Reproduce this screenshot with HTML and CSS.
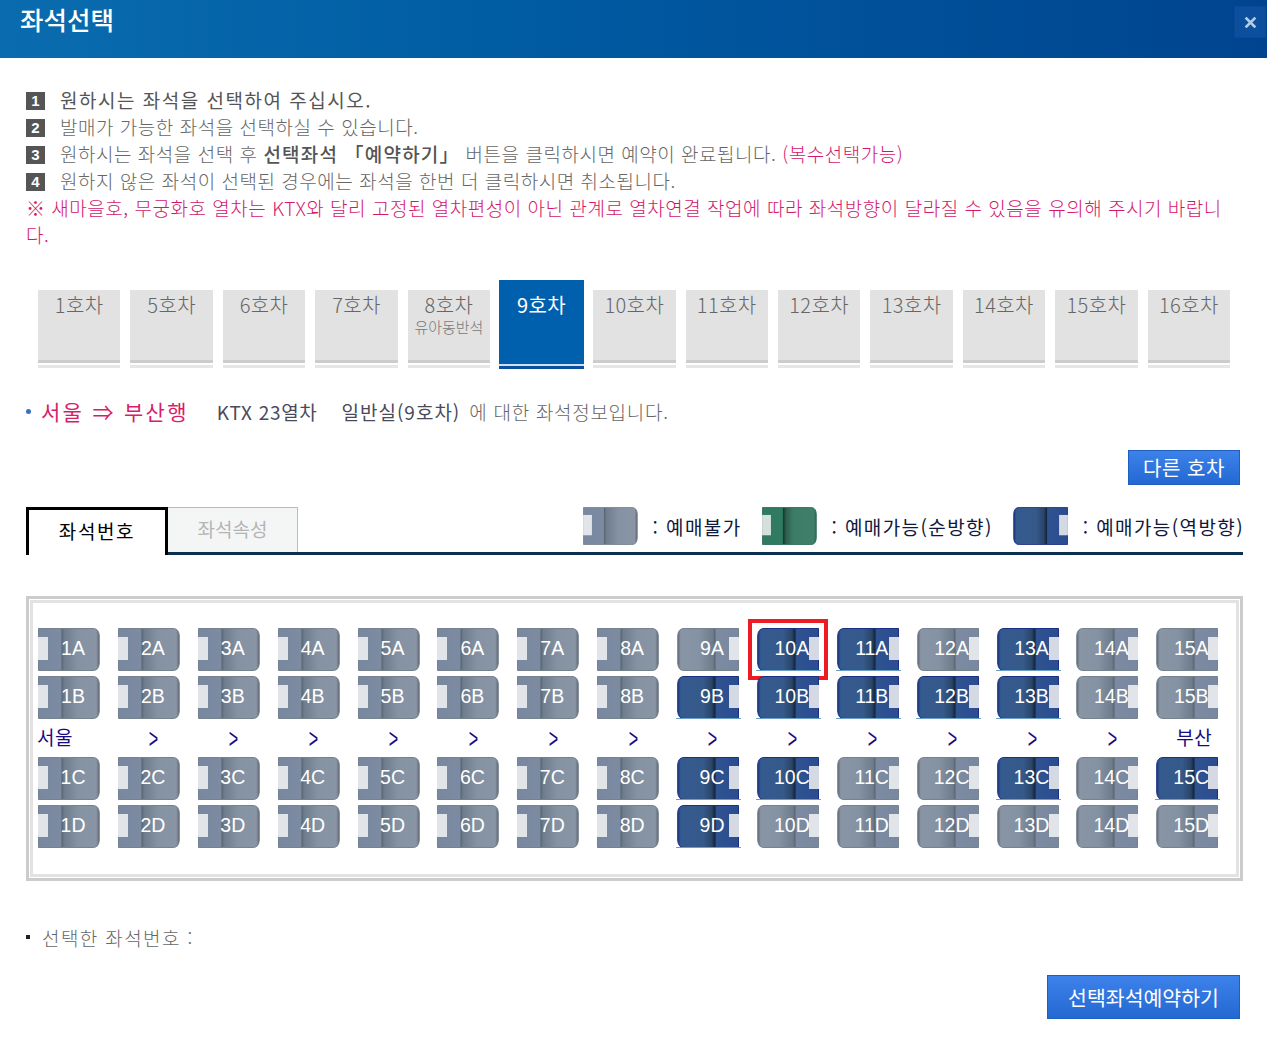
FILE: index.html
```html
<!DOCTYPE html>
<html lang="ko">
<head>
<meta charset="utf-8">
<title>좌석선택</title>
<link rel="stylesheet" href="styles.css">
</head>
<body>
<svg class="defs" width="0" height="0" aria-hidden="true">
  <defs>
    <linearGradient id="g-gray" x1="0" x2="1" y1="0" y2="0">
      <stop offset="0" stop-color="#5c6670"/><stop offset=".05" stop-color="#8995a5"/><stop offset=".35" stop-color="#8492a3"/><stop offset=".58" stop-color="#6f7c8c"/><stop offset=".615" stop-color="#5a6574"/><stop offset=".63" stop-color="#7c8ba0"/><stop offset="1" stop-color="#7888a0"/>
    </linearGradient>
    <linearGradient id="g-blue" x1="0" x2="1" y1="0" y2="0">
      <stop offset="0" stop-color="#1b3680"/><stop offset=".05" stop-color="#345a8e"/><stop offset=".42" stop-color="#36598a"/><stop offset=".56" stop-color="#2a4568"/><stop offset=".615" stop-color="#14233c"/><stop offset=".63" stop-color="#2f5290"/><stop offset="1" stop-color="#2b4d90"/>
    </linearGradient>
    <linearGradient id="g-green" x1="0" x2="1" y1="0" y2="0">
      <stop offset="0" stop-color="#2a6b55"/><stop offset=".05" stop-color="#40806a"/><stop offset=".42" stop-color="#3d7d68"/><stop offset=".56" stop-color="#2d5f4f"/><stop offset=".615" stop-color="#16382d"/><stop offset=".63" stop-color="#2f7a60"/><stop offset="1" stop-color="#2f7a60"/>
    </linearGradient>
    <symbol id="seat-gray" viewBox="0 0 62 43">
      <path d="M7 .5H61.5V42.5H7Q1 42.5 .7 35V8Q1 .5 7 .5Z" fill="url(#g-gray)" stroke="#77828f"/><rect x="52" y="9" width="10" height="23" fill="#e1e4e8"/>
    </symbol>
    <symbol id="seat-blue" viewBox="0 0 62 43">
      <path d="M7 .5H61.5V42.5H7Q1 42.5 .7 35V8Q1 .5 7 .5Z" fill="url(#g-blue)" stroke="#1c2f86"/><rect x="52" y="9" width="10" height="23" fill="#d4d9e3"/>
    </symbol>
    <symbol id="seat-green" viewBox="0 0 62 43">
      <path d="M7 .5H61.5V42.5H7Q1 42.5 .7 35V8Q1 .5 7 .5Z" fill="url(#g-green)" stroke="#2b6a55"/><rect x="52" y="9" width="10" height="23" fill="#d6e0db"/>
    </symbol>
  </defs>
</svg>

<header class="top">
  <h1 class="title">좌석선택</h1>
  <button class="close" type="button">
    <svg viewBox="0 0 12 12" width="13" height="13"><path d="M1.5 1.5L10.5 10.5M10.5 1.5L1.5 10.5" stroke="#b9cbe0" stroke-width="2.6" fill="none"/></svg>
  </button>
</header>

<main class="content">
  <ol class="notes">
    <li class="note strong"><span class="num">1</span>원하시는 좌석을 선택하여 주십시오.</li>
    <li class="note"><span class="num">2</span>발매가 가능한 좌석을 선택하실 수 있습니다.</li>
    <li class="note"><span class="num">3</span>원하시는 좌석을 선택 후 <b class="em">선택좌석 「예약하기」</b> 버튼을 클릭하시면 예약이 완료됩니다. <span class="pink">(복수선택가능)</span></li>
    <li class="note"><span class="num">4</span>원하지 않은 좌석이 선택된 경우에는 좌석을 한번 더 클릭하시면 취소됩니다.</li>
    <li class="note pink">※ 새마을호, 무궁화호 열차는 KTX와 달리 고정된 열차편성이 아닌 관계로 열차연결 작업에 따라 좌석방향이 달라질 수 있음을 유의해 주시기 바랍니<br>다.</li>
  </ol>

  <nav class="cars">
    <a class="car">1호차</a>
    <a class="car">5호차</a>
    <a class="car">6호차</a>
    <a class="car">7호차</a>
    <a class="car">8호차<small class="sub">유아동반석</small></a>
    <a class="car active">9호차</a>
    <a class="car">10호차</a>
    <a class="car">11호차</a>
    <a class="car">12호차</a>
    <a class="car">13호차</a>
    <a class="car">14호차</a>
    <a class="car">15호차</a>
    <a class="car">16호차</a>
  </nav>

  <p class="route"><i class="dot"></i><span class="route-name">서울 ⇒ 부산행</span><span class="train">KTX 23열차</span><span class="train">일반실(9호차)</span><span class="desc">에 대한 좌석정보입니다.</span></p>

  <div class="other-row"><button class="btn other" type="button">다른 호차</button></div>

  <div class="tabbar">
    <div class="tab on">좌석번호</div>
    <div class="tab off">좌석속성</div>
    <div class="legend">
      <svg class="lg-seat flip"><use href="#seat-gray"/></svg><span class="lg-text">: 예매불가</span>
      <svg class="lg-seat flip"><use href="#seat-green"/></svg><span class="lg-text">: 예매가능(순방향)</span>
      <svg class="lg-seat"><use href="#seat-blue"/></svg><span class="lg-text">: 예매가능(역방향)</span>
    </div>
  </div>

  <section class="map">
    <div class="map-inner">
      <div class="grid">
        <div class="seat"><svg class="flip"><use href="#seat-gray"/></svg><b>1A</b></div>
        <div class="seat"><svg class="flip"><use href="#seat-gray"/></svg><b>2A</b></div>
        <div class="seat"><svg class="flip"><use href="#seat-gray"/></svg><b>3A</b></div>
        <div class="seat"><svg class="flip"><use href="#seat-gray"/></svg><b>4A</b></div>
        <div class="seat"><svg class="flip"><use href="#seat-gray"/></svg><b>5A</b></div>
        <div class="seat"><svg class="flip"><use href="#seat-gray"/></svg><b>6A</b></div>
        <div class="seat"><svg class="flip"><use href="#seat-gray"/></svg><b>7A</b></div>
        <div class="seat"><svg class="flip"><use href="#seat-gray"/></svg><b>8A</b></div>
        <div class="seat"><svg><use href="#seat-gray"/></svg><b>9A</b></div>
        <div class="seat avail picked"><svg><use href="#seat-blue"/></svg><b>10A</b></div>
        <div class="seat avail"><svg><use href="#seat-blue"/></svg><b>11A</b></div>
        <div class="seat"><svg><use href="#seat-gray"/></svg><b>12A</b></div>
        <div class="seat avail"><svg><use href="#seat-blue"/></svg><b>13A</b></div>
        <div class="seat"><svg><use href="#seat-gray"/></svg><b>14A</b></div>
        <div class="seat"><svg><use href="#seat-gray"/></svg><b>15A</b></div>

        <div class="seat"><svg class="flip"><use href="#seat-gray"/></svg><b>1B</b></div>
        <div class="seat"><svg class="flip"><use href="#seat-gray"/></svg><b>2B</b></div>
        <div class="seat"><svg class="flip"><use href="#seat-gray"/></svg><b>3B</b></div>
        <div class="seat"><svg class="flip"><use href="#seat-gray"/></svg><b>4B</b></div>
        <div class="seat"><svg class="flip"><use href="#seat-gray"/></svg><b>5B</b></div>
        <div class="seat"><svg class="flip"><use href="#seat-gray"/></svg><b>6B</b></div>
        <div class="seat"><svg class="flip"><use href="#seat-gray"/></svg><b>7B</b></div>
        <div class="seat"><svg class="flip"><use href="#seat-gray"/></svg><b>8B</b></div>
        <div class="seat avail"><svg><use href="#seat-blue"/></svg><b>9B</b></div>
        <div class="seat avail"><svg><use href="#seat-blue"/></svg><b>10B</b></div>
        <div class="seat avail"><svg><use href="#seat-blue"/></svg><b>11B</b></div>
        <div class="seat avail"><svg><use href="#seat-blue"/></svg><b>12B</b></div>
        <div class="seat avail"><svg><use href="#seat-blue"/></svg><b>13B</b></div>
        <div class="seat"><svg><use href="#seat-gray"/></svg><b>14B</b></div>
        <div class="seat"><svg><use href="#seat-gray"/></svg><b>15B</b></div>

        <div class="way start">서울</div>
        <div class="way"><span class="chev">&gt;</span></div><div class="way"><span class="chev">&gt;</span></div><div class="way"><span class="chev">&gt;</span></div><div class="way"><span class="chev">&gt;</span></div><div class="way"><span class="chev">&gt;</span></div><div class="way"><span class="chev">&gt;</span></div><div class="way"><span class="chev">&gt;</span></div><div class="way"><span class="chev">&gt;</span></div><div class="way"><span class="chev">&gt;</span></div><div class="way"><span class="chev">&gt;</span></div><div class="way"><span class="chev">&gt;</span></div><div class="way"><span class="chev">&gt;</span></div><div class="way"><span class="chev">&gt;</span></div>
        <div class="way end">부산</div>

        <div class="seat"><svg class="flip"><use href="#seat-gray"/></svg><b>1C</b></div>
        <div class="seat"><svg class="flip"><use href="#seat-gray"/></svg><b>2C</b></div>
        <div class="seat"><svg class="flip"><use href="#seat-gray"/></svg><b>3C</b></div>
        <div class="seat"><svg class="flip"><use href="#seat-gray"/></svg><b>4C</b></div>
        <div class="seat"><svg class="flip"><use href="#seat-gray"/></svg><b>5C</b></div>
        <div class="seat"><svg class="flip"><use href="#seat-gray"/></svg><b>6C</b></div>
        <div class="seat"><svg class="flip"><use href="#seat-gray"/></svg><b>7C</b></div>
        <div class="seat"><svg class="flip"><use href="#seat-gray"/></svg><b>8C</b></div>
        <div class="seat avail"><svg><use href="#seat-blue"/></svg><b>9C</b></div>
        <div class="seat avail"><svg><use href="#seat-blue"/></svg><b>10C</b></div>
        <div class="seat"><svg><use href="#seat-gray"/></svg><b>11C</b></div>
        <div class="seat"><svg><use href="#seat-gray"/></svg><b>12C</b></div>
        <div class="seat avail"><svg><use href="#seat-blue"/></svg><b>13C</b></div>
        <div class="seat"><svg><use href="#seat-gray"/></svg><b>14C</b></div>
        <div class="seat avail"><svg><use href="#seat-blue"/></svg><b>15C</b></div>

        <div class="seat"><svg class="flip"><use href="#seat-gray"/></svg><b>1D</b></div>
        <div class="seat"><svg class="flip"><use href="#seat-gray"/></svg><b>2D</b></div>
        <div class="seat"><svg class="flip"><use href="#seat-gray"/></svg><b>3D</b></div>
        <div class="seat"><svg class="flip"><use href="#seat-gray"/></svg><b>4D</b></div>
        <div class="seat"><svg class="flip"><use href="#seat-gray"/></svg><b>5D</b></div>
        <div class="seat"><svg class="flip"><use href="#seat-gray"/></svg><b>6D</b></div>
        <div class="seat"><svg class="flip"><use href="#seat-gray"/></svg><b>7D</b></div>
        <div class="seat"><svg class="flip"><use href="#seat-gray"/></svg><b>8D</b></div>
        <div class="seat avail"><svg><use href="#seat-blue"/></svg><b>9D</b></div>
        <div class="seat"><svg><use href="#seat-gray"/></svg><b>10D</b></div>
        <div class="seat"><svg><use href="#seat-gray"/></svg><b>11D</b></div>
        <div class="seat"><svg><use href="#seat-gray"/></svg><b>12D</b></div>
        <div class="seat"><svg><use href="#seat-gray"/></svg><b>13D</b></div>
        <div class="seat"><svg><use href="#seat-gray"/></svg><b>14D</b></div>
        <div class="seat"><svg><use href="#seat-gray"/></svg><b>15D</b></div>
      </div>
    </div>
  </section>

  <p class="selected"><i class="square"></i>선택한 좌석번호 :</p>
  <div class="submit-row"><button class="btn submit" type="button">선택좌석예약하기</button></div>
</main>
</body>
</html>
```
FILE: styles.css
```css
* { box-sizing: border-box; }
html, body { margin: 0; padding: 0; }
body {
  font-family: "Noto Sans CJK KR", "Liberation Sans", sans-serif;
  font-size: 18px;
  color: #666;
  background: #fff;
  overflow: hidden;
  height: 1047px;
}
.defs { position: absolute; }

.top {
  height: 58px;
  background: linear-gradient(90deg, #0a6cae 0%, #005ca3 40%, #00448f 100%);
  position: relative;
}
.title {
  margin: 0;
  padding: 0 0 0 20px;
  font-size: 25.5px;
  line-height: 38px;
  font-weight: 500;
  color: #fff;
}
.close {
  position: absolute;
  top: 6px;
  right: 1px;
  width: 32px;
  height: 32px;
  padding: 0;
  border: 1px solid #0a4a94;
  background: #0b4f9e;
  display: flex;
  align-items: center;
  justify-content: center;
}

.content { padding: 0 24px 0 26px; }

.notes { list-style: none; margin: 0; padding: 28px 0 0; }
.note { line-height: 27px; display: block; font-size: 19px; letter-spacing: .52px; font-weight: 300; white-space: nowrap; }
.note.strong { color: #555; letter-spacing: 1.5px; font-weight: 400; }
.num {
  display: inline-block;
  width: 19px;
  height: 18px;
  margin-right: 15px;
  background: #555;
  color: #fff;
  font: bold 15px/18px "Liberation Sans", sans-serif;
  text-align: center;
  vertical-align: 2px;
  letter-spacing: 0;
}
.em { color: #555; font-weight: 500; letter-spacing: 1.2px; }
.pink { color: #d4176c; }

.cars {
  display: flex;
  align-items: flex-end;
  gap: 10px;
  height: 89px;
  margin: 32px 0 0 12px;
  width: 1192px;
}
.car {
  flex: 1 1 0;
  height: 78px;
  margin-bottom: 1px;
  padding-top: 1px;
  background: #e2e2e2;
  border-bottom: 3px solid #e6e6e6;
  box-shadow: inset 0 -2px 0 #fff, inset 0 -5px 0 #ccc;
  text-align: center;
  font-size: 20px;
  line-height: 28px;
  letter-spacing: .4px;
  font-weight: 300;
  color: #666;
  display: flex;
  flex-direction: column;
}
.sub { font-size: 15px; line-height: 16px; letter-spacing: 0; color: #777; }
.car.active {
  height: 89px;
  flex: 0 0 85px;
  margin: 0 -1px;
  background: #0060ae;
  color: #fff;
  font-weight: 400;
  border-bottom: 3px solid #0b50a0;
  box-shadow: inset 0 -2px 0 #cfe0f0;
  padding-top: 11px;
}

.route {
  margin: 27px 0 0;
  height: 30px;
  display: flex;
  align-items: center;
  font-size: 19px;
  letter-spacing: .7px;
  color: #555;
}
.dot { width: 5px; height: 5px; border-radius: 50%; background: #3a6fc0; margin-right: 10px; }
.route-name { color: #d81b6a; font-size: 21px; letter-spacing: 2.3px; margin-right: 28px; }
.train { margin-right: 24px; color: #4a4a5a; }
.train + .train { margin-right: 9px; letter-spacing: 1px; }
.desc { color: #666; font-weight: 300; }

.other-row { display: flex; justify-content: flex-end; padding: 24px 3px 0 0; }
.btn {
  border: 1px solid #1f5fbf;
  background: linear-gradient(180deg, #3d82ea, #2468d2);
  color: #fff;
  font-family: inherit;
  padding: 0;
}
.other { width: 112px; height: 35px; font-size: 20px; line-height: 28px; letter-spacing: .6px; }

.tabbar {
  display: flex;
  align-items: flex-end;
  height: 48px;
  margin-top: 22px;
  border-bottom: 3px solid #0b3050;
  position: relative;
}
.tab { text-align: center; font-size: 19px; }
.tab.on {
  width: 142px;
  height: 48px;
  margin-bottom: -3px;
  border: 3px solid #000;
  border-bottom: 0;
  background: #fff;
  color: #000;
  line-height: 41px;
  letter-spacing: 1.6px;
}
.tab.off {
  width: 130px;
  height: 45px;
  border: 1px solid #bbb;
  border-left: 0;
  border-bottom: 0;
  background: #f4f6f6;
  color: #b4b4b4;
  line-height: 42px;
}
.legend {
  margin-left: auto;
  height: 45px;
  display: flex;
  align-items: center;
  padding-bottom: 7px;
}
.lg-seat { width: 55px; height: 38px; margin-left: 21px; display: block; }
.lg-text { color: #10183c; font-size: 19px; letter-spacing: 1.4px; margin-left: 15px; margin-right: -1px; white-space: nowrap; }
.flip { transform: scaleX(-1); }

.map {
  margin-top: 41px;
  width: 1217px;
  height: 285px;
  border: 3px solid #ccc;
  background: #fff;
  padding: 1px;
}
.map-inner {
  height: 100%;
  border: 3px solid #e2e2e2;
  padding: 25px 0 0 1px;
}
.grid {
  display: grid;
  grid-template-columns: repeat(15, 79.88px);
  grid-template-rows: 48px 48px 33px 48px 48px;
}
.seat {
  position: relative;
  width: 62px;
  height: 43px;
  margin-left: 4px;
}
.seat svg { display: block; width: 62px; height: 43px; }
.seat b {
  position: absolute;
  inset: 0 0 2px 8px;
  display: flex;
  align-items: center;
  justify-content: center;
  font: normal 19.5px "Liberation Sans", sans-serif;
  color: #fff;
}
.seat.avail::after {
  content: "";
  position: absolute;
  left: -1px;
  right: -2px;
  bottom: 0;
  height: 1px;
  background: #6aa0c8;
}
.seat.picked { outline: 4px solid #ed1c24; outline-offset: 5px; }
.way {
  color: #1a0a80;
  text-align: center;
  font-size: 19px;
  line-height: 26px;
}
.chev { display: inline-block; font-family: "Liberation Sans", sans-serif; transform: scale(.85, 1.5); }
.way.start { text-align: left; padding-left: 3px; letter-spacing: .5px; }
.way.end { padding-left: 4px; letter-spacing: .5px; }

.selected {
  margin: 41px 0 0;
  height: 30px;
  display: flex;
  align-items: center;
  font-size: 19px;
  letter-spacing: 1.4px;
  font-weight: 300;
  color: #666;
}
.square { width: 4px; height: 4px; background: #222; margin-right: 12px; }
.submit-row { display: flex; justify-content: flex-end; padding: 23px 3px 0 0; }
.submit { width: 193px; height: 44px; font-size: 20.5px; line-height: 38px; }
```
